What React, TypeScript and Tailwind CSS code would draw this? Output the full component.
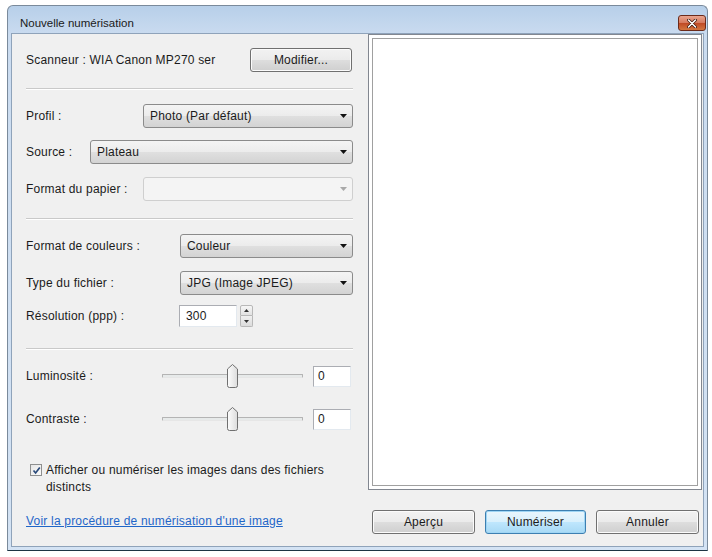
import React from "react";

const font = { fontFamily: '"Liberation Sans", Arial, sans-serif' };

function Arrow({ light }: { light?: boolean }) {
    return (
        <svg width="7" height="4" viewBox="0 0 7 4">
            <polygon points="0,0 7,0 3.5,4" fill={light ? "#a9a9a9" : "#111"} />
        </svg>
    );
}

function Combo({ value, className, disabled }: { value?: string; className: string; disabled?: boolean }) {
    return (
        <div
            className={
                "flex h-[24px] items-center justify-between rounded-[3px] border pl-[6px] pr-[5px] " +
                (disabled
                    ? "border-[#cfcfcf] bg-[#f4f4f4] "
                    : "border-[#8b8b8b] bg-[linear-gradient(#f4f4f4,#ececec_48%,#dfdfdf_52%,#d3d3d3)] ") +
                className
            }
        >
            <span className="text-[12px] text-[#1b1b1b]">{value}</span>
            <Arrow light={disabled} />
        </div>
    );
}

function Btn({ label, primary, className }: { label: string; primary?: boolean; className: string }) {
    return (
        <div
            className={
                "flex h-[24px] items-center justify-center rounded-[3px] border text-[12px] text-[#1b1b1b] " +
                (primary
                    ? "border-[#3c7fb1] bg-[linear-gradient(#eaf6fd,#d9f0fc_48%,#bee6fd_52%,#a7d9f5)] shadow-[inset_0_0_0_1px_#9fd5f4] "
                    : "border-[#707070] bg-[linear-gradient(#f2f2f2,#ebebeb_48%,#dddddd_52%,#cfcfcf)] shadow-[inset_0_0_0_1px_#fbfbfb] ") +
                className
            }
        >
            {label}
        </div>
    );
}

function Separator() {
    return <div className="h-[2px] w-full border-t border-[#c9c9c9] bg-white" />;
}

function Slider() {
    return (
        <div className="relative flex h-[24px] w-[141px] items-center">
            <div className="h-[4px] w-full rounded-[1px] border border-[#b4b4b4] border-b-[#e6e6e6] bg-[#e7eaea]" />
            <svg className="absolute left-[65px] top-0" width="11" height="24" viewBox="0 0 11 24">
                <defs>
                    <linearGradient id="thumb" x1="0" x2="1">
                        <stop offset="0" stopColor="#fdfdfd" />
                        <stop offset="1" stopColor="#dcdcdc" />
                    </linearGradient>
                </defs>
                <path d="M5.5 0.5 L10.5 5 L10.5 21.5 Q10.5 23.5 8.5 23.5 L2.5 23.5 Q0.5 23.5 0.5 21.5 L0.5 5 Z" fill="url(#thumb)" stroke="#707070" />
            </svg>
        </div>
    );
}

function ValueBox({ value }: { value: string }) {
    return (
        <div className="flex h-[21px] w-[38px] items-center border border-[#abadb3] border-r-[#e3e9ef] border-b-[#e3e9ef] bg-white pl-[4px] text-[12px] text-[#1b1b1b]">
            {value}
        </div>
    );
}

export default function App() {
    return (
        <div className="h-[557px] w-[712px] bg-white pl-[7px] pt-[5px]" style={font}>
            <div className="flex h-[546px] w-[701px] flex-col rounded-t-[6px] border border-[#7a8a9b] border-b-[#1d3444] bg-[linear-gradient(#b7cfe9,#cbdcf0_30px,#d4e3f4)]">
                {/* title bar */}
                <div className="flex h-[27px] shrink-0 items-start justify-between pl-[12px] pr-[1px] pt-[9px]">
                    <span className="text-[11.5px] leading-[16px] text-[#1a1a1a]">Nouvelle numérisation</span>
                    <div className="flex h-[16px] w-[28px] items-center justify-center rounded-[3px] border border-[#6b2a1a] bg-[linear-gradient(#e9a58f,#d67a5e_48%,#c04a25_52%,#d3763f)]">
                        <svg width="10" height="9" viewBox="0 0 10 9">
                            <path d="M1.5 1 L8.5 8 M8.5 1 L1.5 8" stroke="#3a1408" strokeWidth="3" strokeLinecap="round" />
                            <path d="M1.5 1 L8.5 8 M8.5 1 L1.5 8" stroke="#ffffff" strokeWidth="1.6" strokeLinecap="round" />
                        </svg>
                    </div>
                </div>

                {/* client area */}
                <div className="mx-[3px] flex h-[514px] border border-[#8fa3ba] bg-[#f0f0f0] text-[12px] tracking-[0.2px] text-[#1b1b1b]">
                    {/* left column */}
                    <div className="flex w-[356px] flex-col pl-[14px] pr-[15px] pt-[15px]">
                        <div className="flex h-[22px] items-center justify-between">
                            <span>Scanneur : WIA Canon MP270 ser</span>
                            <Btn label="Modifier..." className="h-[22px] w-[102px] mr-[1px]" />
                        </div>

                        <div className="mt-[17px]"><Separator /></div>

                        <div className="mt-[14px] flex items-center">
                            <span className="w-[117px]">Profil :</span>
                            <Combo value="Photo (Par défaut)" className="w-[210px]" />
                        </div>
                        <div className="mt-[12px] flex items-center">
                            <span className="w-[64px]">Source :</span>
                            <Combo value="Plateau" className="w-[263px] pl-[4px]" />
                        </div>
                        <div className="mt-[13px] flex items-center">
                            <span className="w-[117px]">Format du papier :</span>
                            <Combo className="w-[210px]" disabled />
                        </div>

                        <div className="mt-[17px]"><Separator /></div>

                        <div className="mt-[14px] flex items-center">
                            <span className="w-[154px]">Format de couleurs :</span>
                            <Combo value="Couleur" className="w-[173px]" />
                        </div>
                        <div className="mt-[13px] flex items-center">
                            <span className="w-[154px]">Type du fichier :</span>
                            <Combo value="JPG (Image JPEG)" className="w-[173px]" />
                        </div>
                        <div className="mt-[10px] flex items-center">
                            <span className="w-[153px]">Résolution (ppp) :</span>
                            <div className="flex h-[22px] w-[58px] items-center border border-[#abadb3] border-r-[#e3e9ef] border-b-[#e3e9ef] bg-white pl-[6px]">
                                300
                            </div>
                            <div className="ml-[3px] flex h-[22px] w-[13px] flex-col">
                                <div className="flex h-[11px] items-center justify-center rounded-t-[2px] border border-[#b8b8b8] bg-[linear-gradient(#f6f6f6,#e2e2e2)]">
                                    <svg width="5" height="3" viewBox="0 0 5 3"><polygon points="2.5,0 5,3 0,3" fill="#333" /></svg>
                                </div>
                                <div className="flex h-[11px] items-center justify-center rounded-b-[2px] border border-t-0 border-[#b8b8b8] bg-[linear-gradient(#f0f0f0,#dcdcdc)]">
                                    <svg width="5" height="3" viewBox="0 0 5 3"><polygon points="0,0 5,0 2.5,3" fill="#333" /></svg>
                                </div>
                            </div>
                        </div>

                        <div className="mt-[21px]"><Separator /></div>

                        <div className="mt-[14px] flex h-[24px] items-center">
                            <span className="w-[136px]">Luminosité :</span>
                            <Slider />
                            <div className="ml-[10px]"><ValueBox value="0" /></div>
                        </div>
                        <div className="mt-[19px] flex h-[24px] items-center">
                            <span className="w-[136px]">Contraste :</span>
                            <Slider />
                            <div className="ml-[10px]"><ValueBox value="0" /></div>
                        </div>

                        <div className="mt-[31px] flex leading-[17px]">
                            <div className="ml-[4px] mt-[2px] flex h-[12px] w-[12px] shrink-0 items-center justify-center border border-[#8e8f8f] bg-[linear-gradient(135deg,#e6e6e6,#fafafa)]">
                                <svg width="9" height="9" viewBox="0 0 9 9">
                                    <path d="M1.5 4.5 L3.6 7 L7.8 1.5" fill="none" stroke="#2a4a7a" strokeWidth="1.7" />
                                </svg>
                            </div>
                            <span className="ml-[4px]">
                                Afficher ou numériser les images dans des fichiers
                                <br />
                                distincts
                            </span>
                        </div>

                        <a className="mt-[17px] leading-[17px] text-[#1f66c8] underline">
                            Voir la procédure de numérisation d'une image
                        </a>
                    </div>

                    {/* right column */}
                    <div className="flex w-[334px] flex-col">
                        <div className="h-[456px] border border-[#828790] bg-white p-[3px]">
                            <div className="h-full w-full border border-[#a0a0a0]" />
                        </div>
                        <div className="mt-[20px] flex gap-[10px] pl-[4px]">
                            <Btn label="Aperçu" className="w-[103px]" />
                            <Btn label="Numériser" primary className="w-[101px]" />
                            <Btn label="Annuler" className="w-[103px]" />
                        </div>
                    </div>
                </div>
            </div>
        </div>
    );
}
